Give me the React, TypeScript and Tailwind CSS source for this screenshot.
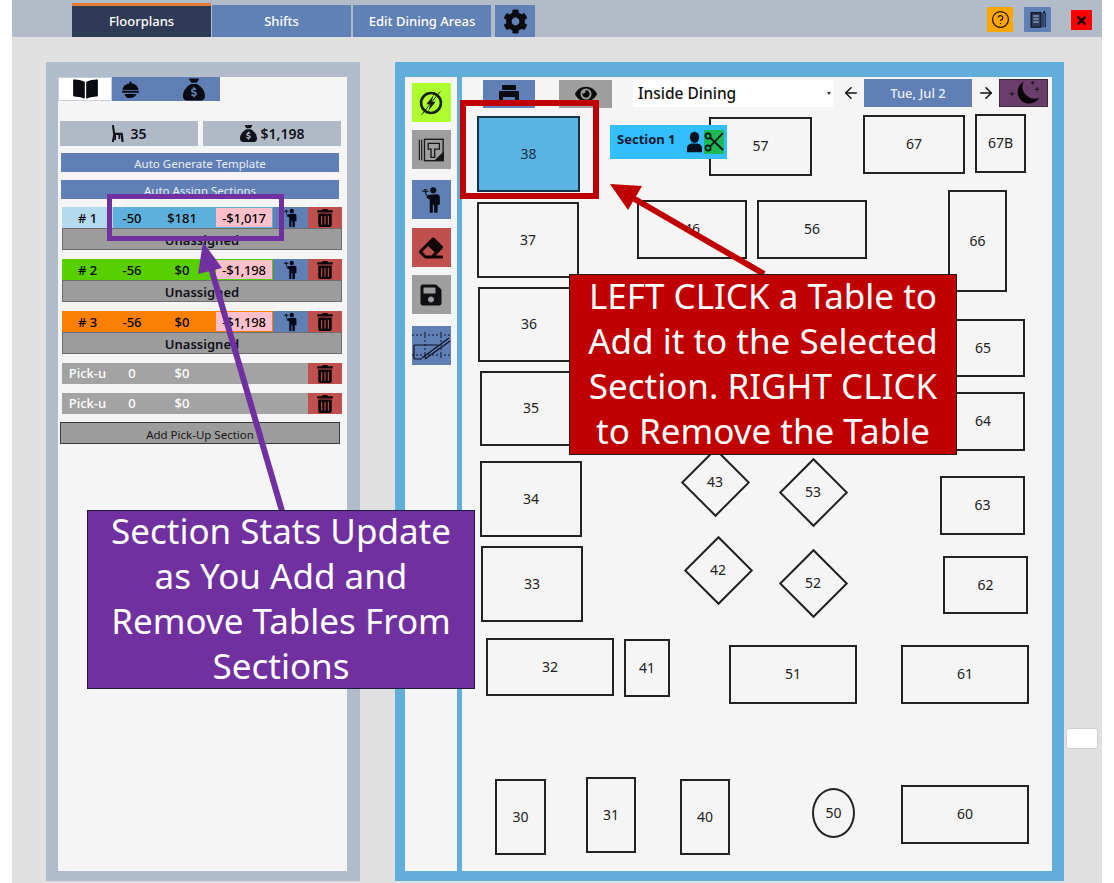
import { ArrowLeft, ArrowRight, CircleHelp } from "lucide-react";
import { FaBookOpen, FaCog, FaEraser, FaEye, FaSave, FaTimes, FaTrashAlt } from "react-icons/fa";
import { FaSackDollar } from "react-icons/fa6";

type Table = { label: string; x: number; y: number; w: number; h: number; selected?: boolean };

// page coordinates, canvas starts at 462,77
const CANVAS_X = 462;
const CANVAS_Y = 77;

const tables: Table[] = [
  { label: "38", x: 477, y: 116, w: 103, h: 76, selected: true },
  { label: "57", x: 709, y: 117, w: 103, h: 59 },
  { label: "67", x: 863, y: 115, w: 102, h: 59 },
  { label: "67B", x: 975, y: 114, w: 51, h: 59 },
  { label: "37", x: 477, y: 202, w: 102, h: 76 },
  { label: "46", x: 637, y: 200, w: 110, h: 59 },
  { label: "56", x: 757, y: 200, w: 110, h: 59 },
  { label: "66", x: 948, y: 190, w: 59, h: 102 },
  { label: "36", x: 478, y: 287, w: 102, h: 75 },
  { label: "65", x: 941, y: 319, w: 84, h: 58 },
  { label: "35", x: 480, y: 371, w: 102, h: 75 },
  { label: "64", x: 941, y: 392, w: 84, h: 59 },
  { label: "34", x: 480, y: 461, w: 102, h: 76 },
  { label: "63", x: 940, y: 476, w: 85, h: 59 },
  { label: "33", x: 481, y: 546, w: 102, h: 76 },
  { label: "62", x: 943, y: 556, w: 85, h: 58 },
  { label: "32", x: 486, y: 638, w: 128, h: 58 },
  { label: "41", x: 624, y: 639, w: 46, h: 58 },
  { label: "51", x: 729, y: 645, w: 128, h: 59 },
  { label: "61", x: 901, y: 645, w: 128, h: 59 },
  { label: "30", x: 495, y: 779, w: 51, h: 76 },
  { label: "31", x: 586, y: 777, w: 50, h: 76 },
  { label: "40", x: 680, y: 779, w: 50, h: 76 },
  { label: "60", x: 901, y: 785, w: 128, h: 59 },
];

const diamonds = [
  { label: "43", cx: 715, cy: 482 },
  { label: "53", cx: 813, cy: 492 },
  { label: "42", cx: 718, cy: 570 },
  { label: "52", cx: 813, cy: 583 },
];

const sections = [
  { num: "# 1", stat: "-50", money: "$181", diff: "-$1,017", head: "bg-[#b5d9ee]", body: "bg-[#5eb0dc]" },
  { num: "# 2", stat: "-56", money: "$0", diff: "-$1,198", head: "bg-[#58d000]", body: "bg-[#58d000]" },
  { num: "# 3", stat: "-56", money: "$0", diff: "-$1,198", head: "bg-[#fa8005]", body: "bg-[#fa8005]" },
];

function Waiter({ className }: { className?: string }) {
  return (
    <svg viewBox="0 0 24 30" className={className} fill="currentColor">
      <circle cx="14" cy="4.5" r="3.5" />
      <path d="M9.5 9.5 L19 9 Q21.5 9.5 21.5 12 V21 H19 V30 H15 V21 H13.5 V30 H10 V15 L6 13 L7 10.5 Z" />
      <path d="M1 5 H9 L8.2 6.2 H1.8 Z M2.5 4.5 Q5 1.5 7.5 4.5 Z M4.2 6.2 H5.6 L7 10.5 H5.6 Z" />
    </svg>
  );
}

function TrashCell() {
  return (
    <div className="flex h-full w-[34px] items-center justify-center bg-[#c0504d] text-[#0a0506]">
      <FaTrashAlt className="h-[18px] w-[16px]" />
    </div>
  );
}

function SectionRow({ s }: { s: (typeof sections)[number] }) {
  return (
    <div className="mb-[9px] w-[280px]">
      <div className="flex h-[21px] text-[13px] font-medium leading-[23px] text-black">
        <div className={`${s.head} w-[51px] text-center`}>{s.num}</div>
        <div className={`${s.body} flex w-[102px]`}>
          <span className="w-[38px] text-center">{s.stat}</span>
          <span className="w-[62px] text-center">{s.money}</span>
        </div>
        <div className={`${s.body} h-full w-[58px] p-px`}>
          <div className="h-full bg-[#ffc0cb] text-center leading-[20px] tracking-[-0.2px]">{s.diff}</div>
        </div>
        <div className="flex h-full w-[35px] items-center justify-center bg-[#5f7fb5] text-[#050a1a]">
          <Waiter className="h-[19px] w-[15px]" />
        </div>
        <TrashCell />
      </div>
      <div className="h-[22px] border border-[#6e6e6e] bg-[#9c9c9c] text-center text-[13px] font-semibold leading-[23px] text-[#101018]">
        Unassigned
      </div>
    </div>
  );
}

function PickupRow() {
  return (
    <div className="mb-[9px] flex h-[21px] w-[280px] bg-[#a3a3a3] text-[13px] font-medium leading-[21px] text-white">
      <span className="w-[51px] text-center">Pick-u</span>
      <span className="w-[38px] text-center">0</span>
      <span className="w-[62px] text-center">$0</span>
      <span className="flex-1" />
      <TrashCell />
    </div>
  );
}

function RailButton({ color, children }: { color: string; children: React.ReactNode }) {
  return <div className={`flex h-[39px] w-[39px] items-center justify-center ${color}`}>{children}</div>;
}

function Cloche({ className }: { className?: string }) {
  return (
    <svg viewBox="0 0 24 24" className={className} fill="currentColor">
      <circle cx="12" cy="3.5" r="1.5" />
      <path d="M2 13 A10 9 0 0 1 22 13 Z" />
      <rect x="1" y="14" width="22" height="2" rx="1" />
      <path d="M4 18 Q12 17 20 18 L17 21 Q11 24 7 22 Z" />
    </svg>
  );
}

function Chair({ className }: { className?: string }) {
  return (
    <svg viewBox="0 0 14 20" className={className} fill="none" stroke="currentColor" strokeWidth="1.8">
      <path d="M2 1 L3.5 11 L2 19" strokeWidth="2.2" />
      <path d="M3 10.5 H11.5 L12.5 19" strokeWidth="2.4" />
      <path d="M4.5 11 V17" />
      <path d="M9 11 V16" />
    </svg>
  );
}

function App() {
  return (
    <div className="relative h-[883px] w-[1114px] overflow-hidden bg-white font-['Noto_Sans','Open_Sans',sans-serif]">
      <div className="mx-[12px] h-full bg-[#e0e0e0]">
        {/* top bar */}
        <div className="flex h-[37px] items-end bg-[#b1bcc8] pl-[60px] pr-[10px]">
          <div className="mr-px flex h-[34px] w-[139px] items-center justify-center border-t-[3px] border-[#e07a35] bg-[#2f3a56] pt-px text-[13px] font-medium text-white">
            Floorplans
          </div>
          <div className="mr-[2px] flex h-[32px] w-[139px] items-center justify-center bg-[#6081b5] pt-[2px] text-[13px] font-medium text-white">
            Shifts
          </div>
          <div className="mr-[4px] flex h-[32px] w-[138px] items-center justify-center bg-[#6081b5] pt-[2px] text-[13px] font-medium text-white">
            Edit Dining Areas
          </div>
          <div className="flex h-[32px] w-[40px] items-center justify-center bg-[#6081b5] text-[#0a0a0f]">
            <FaCog className="h-[25px] w-[25px]" />
          </div>
          <div className="flex-1" />
          <div className="mb-[5px] flex h-[25px] w-[26px] items-center justify-center bg-[#ffa500] text-[#1a1206]">
            <CircleHelp className="h-[19px] w-[19px]" strokeWidth={1.6} />
          </div>
          <div className="mb-[5px] ml-[11px] flex h-[25px] w-[27px] items-center justify-center bg-[#6081b5] text-[#101828]">
            <svg viewBox="0 0 20 22" className="h-[19px] w-[17px]" fill="none" stroke="currentColor" strokeWidth="1.6">
              <path d="M14 3 H2.5 V20 H14 Z" fill="#2c3e5e" />
              <path d="M5 7 H11.5 M5 10.5 H11.5 M5 14 H11.5" stroke="#b8c6de" strokeWidth="1.2" />
              <path d="M16.5 20 V4 L18 1.5 L19 4 V20" strokeWidth="1.3" />
            </svg>
          </div>
          <div className="mb-[7px] ml-[20px] flex h-[20px] w-[21px] items-center justify-center bg-[#ff0000] text-[#1a0000]">
            <FaTimes className="h-[13px] w-[13px]" />
          </div>
        </div>

        <div className="flex pl-[34px] pt-[25px]">
          {/* left panel */}
          <div className="h-[819px] w-[314px] bg-[#b0bcc9] pb-[10px] pl-[12px] pr-[13px] pt-[15px]">
            <div className="h-full bg-[#f5f5f5] px-[2px]">
              <div className="-mx-[2px] flex h-[24px] w-[162px] text-[#0a0a12]">
                <div className="flex w-[54px] items-center justify-center border border-[#c8d0dc] bg-white">
                  <FaBookOpen className="h-[22px] w-[27px]" />
                </div>
                <div className="flex w-[108px] items-center bg-[#5f7fb5]">
                  <div className="flex w-[36px] justify-center">
                    <Cloche className="h-[19px] w-[19px]" />
                  </div>
                  <div className="w-[72px] pl-[35px]">
                    <FaSackDollar className="h-[23px] w-[22px]" />
                  </div>
                </div>
              </div>

              <div className="mt-[20px] flex w-[281px] gap-[5px] text-[14px] font-semibold text-[#101018]">
                <div className="flex h-[25px] w-[138px] items-center justify-center gap-[6px] bg-[#afbac6]">
                  <Chair className="h-[19px] w-[13px]" />
                  35
                </div>
                <div className="flex h-[25px] w-[138px] items-center justify-center gap-[4px] bg-[#afbac6]">
                  <FaSackDollar className="h-[17px] w-[17px]" />
                  $1,198
                </div>
              </div>

              <div className="ml-px mt-[7px] h-[19px] w-[278px] overflow-hidden bg-[#5f7fb5] text-center text-[11.5px] leading-[22px] text-[#e8eef8]">
                Auto Generate Template
              </div>
              <div className="ml-px mt-[8px] h-[19px] w-[278px] overflow-hidden bg-[#5f7fb5] text-center text-[11.5px] leading-[22px] text-[#e8eef8]">
                Auto Assign Sections
              </div>

              <div className="ml-[2px] mt-[8px]">
                {sections.map((s) => (
                  <SectionRow key={s.num} s={s} />
                ))}
                <PickupRow />
                <PickupRow />
              </div>
              <div className="mt-[-1px] h-[22px] w-[280px] overflow-hidden border border-[#3a3a3a] bg-[#9c9c9c] text-center text-[11.5px] leading-[24px] text-[#181818]">
                Add Pick-Up Section
              </div>
            </div>
          </div>

          {/* right panel */}
          <div className="ml-[35px] flex h-[819px] w-[669px] bg-[#62aedb] pb-[10px] pl-[10px] pr-[12px] pt-[15px]">
            <div className="flex w-[52px] flex-col items-center bg-[#f5f5f5] pt-[6px]">
              <RailButton color="bg-[#adff2f]">
                <svg viewBox="0 0 24 24" className="h-[28px] w-[28px]" fill="none" stroke="#142008" strokeWidth="2.2">
                  <circle cx="12" cy="12" r="8.5" />
                  <path d="M14.5 5 L8 13 H11.5 L9.5 19 L16 11 H12.5 Z" fill="#142008" stroke="none" />
                  <path d="M20 2 L4 22" strokeWidth="0.8" />
                </svg>
              </RailButton>
              <div className="mt-[8px]">
                <RailButton color="bg-[#9e9e9e]">
                  <svg viewBox="0 0 30 30" className="h-[28px] w-[28px]" fill="none" stroke="#15151a" strokeWidth="1.4">
                    <path d="M2.5 4 V26 M5 4 V26" strokeWidth="1.2" />
                    <rect x="8" y="3.5" width="20" height="23" />
                    <path d="M12 8 H24 V14 H19 V23 H15 V14 H12 Z" />
                    <path d="M20 26 L28 18 V26 Z" fill="#15151a" />
                  </svg>
                </RailButton>
              </div>
              <div className="mt-[11px]">
                <RailButton color="bg-[#5f7fb5]">
                  <Waiter className="h-[27px] w-[21px] text-[#060a14]" />
                </RailButton>
              </div>
              <div className="mt-[9px]">
                <RailButton color="bg-[#c0504d]">
                  <FaEraser className="h-[24px] w-[24px] text-[#120606]" />
                </RailButton>
              </div>
              <div className="mt-[8px]">
                <RailButton color="bg-[#9e9e9e]">
                  <FaSave className="h-[24px] w-[24px] text-[#101014]" />
                </RailButton>
              </div>
              <div className="mt-[12px]">
                <RailButton color="bg-[#5f7fb5]">
                  <svg viewBox="0 0 39 39" className="h-[39px] w-[39px]" fill="none" stroke="#0d1424" strokeWidth="1">
                    <path d="M0 9 H39 M0 29 H39 M13 6 V33 M29 6 V33" strokeDasharray="2 2" />
                    <path d="M2 19 H26 M2 19 V33 M2 33 H10" strokeWidth="1.2" />
                    <path d="M10 32 L37 12 M13 33 L38 15" strokeWidth="1.3" />
                  </svg>
                </RailButton>
              </div>
            </div>

            <div className="ml-[5px] flex-1 bg-[#f5f5f5]">
              <div className="relative h-full">
                <div className="flex items-start pl-[21px] pt-[3px]">
                  <div className="flex h-[28px] w-[52px] justify-center bg-[#5f7fb5] pt-[5px]">
                    <svg viewBox="0 0 20 18" className="h-[18px] w-[20px]" fill="#0a0a12">
                      <path d="M4 0 H16 Q17 0 17 1 V5 H3 V1 Q3 0 4 0 Z" />
                      <path d="M1 6 H19 Q20 6 20 7 V18 H16 V12 H4 V18 H0 V7 Q0 6 1 6 Z" />
                    </svg>
                  </div>
                  <div className="ml-[24px] flex h-[28px] w-[53px] items-center justify-center bg-[#9e9e9e] text-[#0a0a0a]">
                    <FaEye className="h-[20px] w-[22px]" />
                  </div>
                  <div className="ml-[21px] flex h-[27px] w-[200px] items-center bg-white pl-[5px] text-[15.5px] font-medium text-[#111]">
                    <span className="flex-1">Inside Dining</span>
                    <span className="mr-[2px] h-0 w-0 border-x-[2.5px] border-t-[3px] border-x-transparent border-t-[#333]" />
                  </div>
                  <ArrowLeft className="ml-[9px] mt-[4px] h-[18px] w-[18px] text-[#111]" strokeWidth={2} />
                  <div className="ml-[4px] flex h-[28px] w-[108px] -translate-y-px items-center justify-center bg-[#5f7fb5] pt-[2px] text-[13px] font-medium text-[#e8eef8]">
                    Tue, Jul 2
                  </div>
                  <ArrowRight className="ml-[5px] mt-[4px] h-[18px] w-[18px] text-[#111]" strokeWidth={2} />
                  <div className="relative ml-[4px] flex h-[28px] w-[49px] -translate-y-px items-center justify-center border border-[#3a2a3a] bg-[#6a3d6a] text-[#0a0509]">
                    <svg viewBox="0 0 48 28" className="h-full w-full" fill="currentColor">
                      <path d="M24 2 A12.5 12.5 0 1 0 41 19 A13 13 0 0 1 24 2 Z" />
                      <path d="M9 15 h5 M11.5 12.5 v5 M32 3 h4 M34 1 v4 M36 10 h5 M38.5 7.5 v5" stroke="currentColor" strokeWidth="0.8" />
                    </svg>
                  </div>
                </div>

                {tables.map((t) => (
                  <div
                    key={t.label}
                    className={`absolute flex items-center justify-center border-2 pb-[2px] text-[14px] ${
                      t.selected
                        ? "border-[#16324a] bg-[#5bb3e3] text-[#16324a]"
                        : "border-[#222] bg-[#f5f5f5] text-[#222]"
                    }`}
                    style={{ left: t.x - CANVAS_X, top: t.y - CANVAS_Y, width: t.w, height: t.h }}
                  >
                    {t.label}
                  </div>
                ))}

                {diamonds.map((d) => (
                  <div
                    key={d.label}
                    className="absolute flex h-[68px] w-[68px] items-center justify-center pb-[2px] text-[14px] text-[#222]"
                    style={{ left: d.cx - 34 - CANVAS_X, top: d.cy - 34 - CANVAS_Y }}
                  >
                    <div className="absolute top-[10px] h-[49px] w-[49px] rotate-45 border-2 border-[#222]" />
                    <span className="relative">{d.label}</span>
                  </div>
                ))}

                <div className="absolute left-[350px] top-[711px] flex h-[50px] w-[43px] items-center justify-center rounded-[50%] border-2 border-[#222] pb-[2px] text-[14px] text-[#222]">
                  50
                </div>

                {/* selected section chip */}
                <div className="absolute left-[148px] top-[48px] flex h-[34px] w-[117px] items-center bg-[#33bfff] pl-[7px] text-[13px] font-bold text-[#0b1a30]">
                  <span className="w-[69px] whitespace-nowrap pb-[4px]">Section 1</span>
                  <svg viewBox="0 0 16 22" className="ml-px h-[22px] w-[15px]" fill="#07121e">
                    <ellipse cx="8" cy="6" rx="5" ry="6" />
                    <path d="M0 22 V18 Q0 13 5 12.5 H11 Q16 13 16 18 V22 Z" />
                  </svg>
                  <div className="ml-[2px] flex h-[24px] w-[20px] items-center justify-center bg-[#1db954]">
                    <svg viewBox="0 0 20 24" className="h-[24px] w-[20px]" fill="none" stroke="#07121e" strokeWidth="1.8">
                      <circle cx="4" cy="6" r="2.6" />
                      <circle cx="4" cy="18" r="2.6" />
                      <path d="M6 7.5 L19 20 M6 16.5 L19 3" />
                    </svg>
                  </div>
                </div>
              </div>
            </div>
          </div>
        </div>
      </div>

      {/* small white button on the right */}
      <div className="absolute left-[1066px] top-[728px] h-[21px] w-[32px] rounded-[3px] border border-[#d0d0d0] bg-white" />

      {/* tutorial annotations */}
      <div className="absolute left-[107px] top-[194px] h-[47px] w-[177px] border-[5px] border-[#7030a0]" />
      <div className="absolute left-[460px] top-[100px] h-[99px] w-[139px] border-[6px] border-[#c00000]" />
      <svg className="absolute left-0 top-0 h-[883px] w-[1114px]" viewBox="0 0 1114 883" fill="none">
        <path d="M764 274 L626 194" stroke="#c00000" strokeWidth="6" />
        <path d="M610 184 L642 186 L628 210 Z" fill="#c00000" />
        <path d="M282 511 L211 268" stroke="#7030a0" strokeWidth="6" />
        <path d="M203 242 L222 268 L198 274 Z" fill="#7030a0" />
      </svg>
      <div className="absolute left-[569px] top-[274px] flex h-[181px] w-[388px] items-center justify-center whitespace-nowrap border border-[#2b1a1a] bg-[#c00000] pb-[4px] text-center text-[35px] leading-[45px] text-white">
        <span>
          LEFT CLICK a Table to
          <br />
          Add it to the Selected
          <br />
          Section. RIGHT CLICK
          <br />
          to Remove the Table
        </span>
      </div>
      <div className="absolute left-[87px] top-[510px] flex h-[179px] w-[388px] items-center justify-center whitespace-nowrap border border-[#1a1a3a] bg-[#7030a0] pb-[4px] text-center text-[35px] leading-[45px] text-white">
        <span>
          Section Stats Update
          <br />
          as You Add and
          <br />
          Remove Tables From
          <br />
          Sections
        </span>
      </div>
    </div>
  );
}

export default App;
